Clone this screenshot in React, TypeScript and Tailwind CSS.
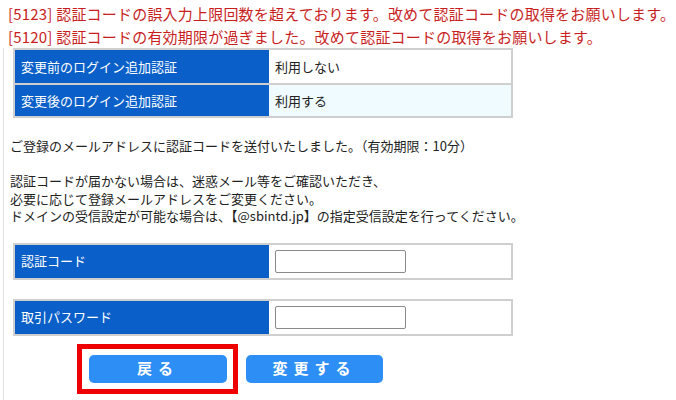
import React from "react";

const font = { fontFamily: '"Noto Sans CJK JP", "Noto Sans", sans-serif' };

function InfoRow({ label, value, alt, first }: { label: string; value: string; alt?: boolean; first?: boolean }) {
  return (
    <div className={`flex h-[33px] ${first ? "" : "border-t-2 border-[#cfcfcf]"}`}>
      <div className="w-[254px] bg-[#0a5fc8] text-white text-[13px] flex items-center pl-[6px]">{label}</div>
      <div className={`flex-1 text-[13px] text-[#222] flex items-center pl-[6px] ${alt ? "bg-[#f0fbff]" : "bg-white"}`}>{value}</div>
    </div>
  );
}

function InputRow({ label, type }: { label: string; type: string }) {
  return (
    <div className="w-[500px] border-2 border-[#cfcfcf] flex h-[37px]">
      <div className="w-[254px] bg-[#0a5fc8] text-white text-[13px] flex items-center pl-[6px]">{label}</div>
      <div className="flex-1 bg-white flex items-center pl-[6px]">
        <input type={type} className="w-[131px] h-[23px] border border-[#8a8a8a] rounded-[2px] bg-white outline-none" />
      </div>
    </div>
  );
}

export default function App() {
  return (
    <div className="w-[676px] h-[400px] bg-white overflow-hidden relative" style={font}>
      <div className="pt-[2px] pl-[8px] text-[15px] leading-[23px] tracking-[0.2px] text-[#c81e1e] whitespace-nowrap">
        <div>[5123] 認証コードの誤入力上限回数を超えております。改めて認証コードの取得をお願いします。</div>
        <div>[5120] 認証コードの有効期限が過ぎました。改めて認証コードの取得をお願いします。</div>
      </div>
      <div className="ml-[3px] border-l border-[#e2e2e2] pl-[9px] h-[360px]">
        <div className="w-[500px] border-2 border-[#cfcfcf]">
          <InfoRow label="変更前のログイン追加認証" value="利用しない" first />
          <InfoRow label="変更後のログイン追加認証" value="利用する" alt />
        </div>
        <div className="mt-[19px] -ml-[3px] text-[13px] leading-[17.5px] text-[#222] whitespace-nowrap">
          <div>ご登録のメールアドレスに認証コードを送付いたしました。（有効期限：10分）</div>
          <div>&nbsp;</div>
          <div>認証コードが届かない場合は、迷惑メール等をご確認いただき、</div>
          <div>必要に応じて登録メールアドレスをご変更ください。</div>
          <div>ドメインの受信設定が可能な場合は、【@sbintd.jp】の指定受信設定を行ってください。</div>
        </div>
        <div className="mt-[18px] flex flex-col gap-[19px]">
          <InputRow label="認証コード" type="text" />
          <InputRow label="取引パスワード" type="password" />
        </div>
        <div className="mt-[8px] flex items-start">
          <div className="ml-[64px] border-[5px] border-[#ee0000] pt-[6px] pb-[6px] pl-[7px] pr-[6px]">
            <button className="w-[138px] h-[28px] rounded-[5px] bg-[#2d8ff5] text-white text-[15px] font-bold tracking-[6px] flex items-center justify-center">戻る</button>
          </div>
          <button className="ml-[8px] mt-[11px] w-[137px] h-[28px] rounded-[5px] bg-[#2d8ff5] text-white text-[15px] font-bold tracking-[6px] flex items-center justify-center">変更する</button>
        </div>
      </div>
    </div>
  );
}
